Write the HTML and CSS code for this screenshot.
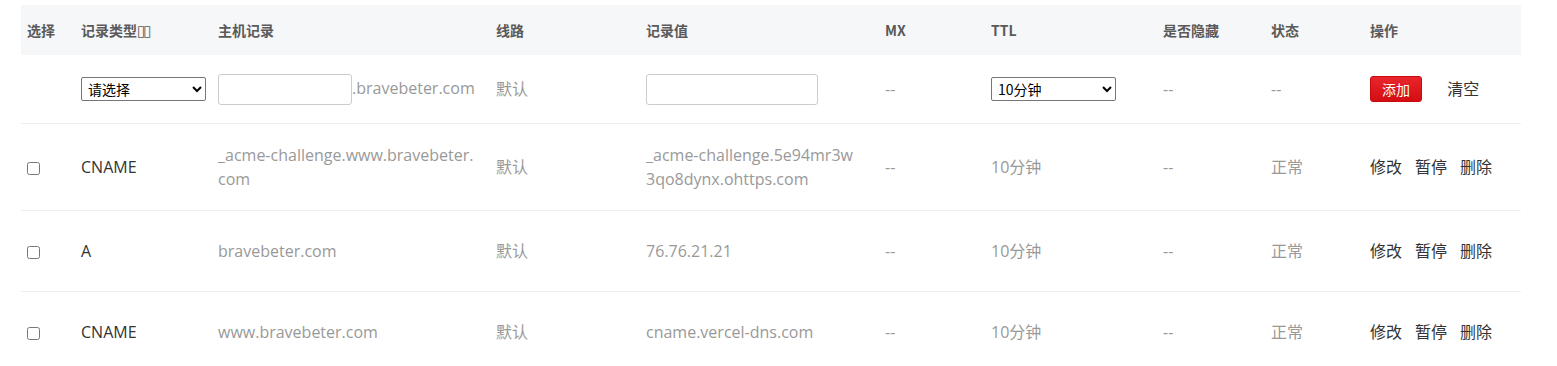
FILE: index.html
```html
<!DOCTYPE html>
<html lang="zh-CN">
<head>
    <meta charset="UTF-8">
    <title>解析记录</title>
    <link rel="stylesheet" href="styles.css">
</head>
<body>
    <div class="wrap">
        <table class="records">
            <colgroup>
                <col class="c-check">
                <col class="c-type">
                <col class="c-host">
                <col class="c-line">
                <col class="c-value">
                <col class="c-mx">
                <col class="c-ttl">
                <col class="c-hide">
                <col class="c-status">
                <col class="c-op">
            </colgroup>
            <thead>
                <tr>
                    <th>选择</th>
                    <th>记录类型<span class="tofu">▯▯</span></th>
                    <th>主机记录</th>
                    <th>线路</th>
                    <th>记录值</th>
                    <th>MX</th>
                    <th>TTL</th>
                    <th>是否隐藏</th>
                    <th>状态</th>
                    <th>操作</th>
                </tr>
            </thead>
            <tbody>
                <tr class="add-row">
                    <td></td>
                    <td>
                        <select class="sel">
                            <option>请选择</option>
                            <option>A</option>
                            <option>CNAME</option>
                        </select>
                    </td>
                    <td><input type="text" class="host-input"><span class="muted">.bravebeter.com</span></td>
                    <td class="muted">默认</td>
                    <td><input type="text" class="value-input"></td>
                    <td class="muted">--</td>
                    <td>
                        <select class="sel">
                            <option>10分钟</option>
                        </select>
                    </td>
                    <td class="muted">--</td>
                    <td class="muted">--</td>
                    <td>
                        <button class="btn-add">添加</button>
                        <a class="btn-clear" href="#">清空</a>
                    </td>
                </tr>
                <tr>
                    <td><input type="checkbox"></td>
                    <td class="dark">CNAME</td>
                    <td class="muted">_acme-challenge.www.bravebeter.<br>com</td>
                    <td class="muted">默认</td>
                    <td class="muted">_acme-challenge.5e94mr3w<br>3qo8dynx.ohttps.com</td>
                    <td class="muted">--</td>
                    <td class="muted">10分钟</td>
                    <td class="muted">--</td>
                    <td class="muted">正常</td>
                    <td class="ops"><a href="#">修改</a><a href="#">暂停</a><a href="#">删除</a></td>
                </tr>
                <tr>
                    <td><input type="checkbox"></td>
                    <td class="dark">A</td>
                    <td class="muted">bravebeter.com</td>
                    <td class="muted">默认</td>
                    <td class="muted">76.76.21.21</td>
                    <td class="muted">--</td>
                    <td class="muted">10分钟</td>
                    <td class="muted">--</td>
                    <td class="muted">正常</td>
                    <td class="ops"><a href="#">修改</a><a href="#">暂停</a><a href="#">删除</a></td>
                </tr>
                <tr>
                    <td><input type="checkbox"></td>
                    <td class="dark">CNAME</td>
                    <td class="muted">www.bravebeter.com</td>
                    <td class="muted">默认</td>
                    <td class="muted">cname.vercel-dns.com</td>
                    <td class="muted">--</td>
                    <td class="muted">10分钟</td>
                    <td class="muted">--</td>
                    <td class="muted">正常</td>
                    <td class="ops"><a href="#">修改</a><a href="#">暂停</a><a href="#">删除</a></td>
                </tr>
            </tbody>
        </table>
    </div>
</body>
</html>
```

FILE: styles.css
```css
body {
    margin: 0;
    padding: 0;
    font-family: "Open Sans", "Noto Sans CJK SC", sans-serif;
    background-color: #fff;
}
.wrap {
    padding: 5px 0 0 21px;
}
.records {
    width: 1500px;
    border-collapse: collapse;
    table-layout: fixed;
}
.c-check { width: 54px; }
.c-type { width: 137px; }
.c-host { width: 278px; }
.c-line { width: 150px; }
.c-value { width: 239px; }
.c-mx { width: 106px; }
.c-ttl { width: 172px; }
.c-hide { width: 108px; }
.c-status { width: 99px; }
.c-op { width: 157px; }

.records th {
    background-color: #f6f7f9;
    height: 50px;
    padding: 0 6px;
    text-align: left;
    font-size: 14px;
    font-weight: bold;
    color: #5a5a5a;
    font-family: "Noto Sans CJK SC", sans-serif;
}
.tofu {
    font-family: "DejaVu Sans", sans-serif;
    font-weight: normal;
    font-size: 15px;
    letter-spacing: -2px;
}
.records td {
    padding: 19px 6px;
    height: 42px;
    font-size: 16px;
    line-height: 24px;
    vertical-align: middle;
    border-bottom: 1px solid #eee;
    color: #999;
    white-space: nowrap;
}
.records tr.add-row td {
    padding: 0 6px;
    height: 68px;
}
.records td.dark {
    color: #333;
}
.muted {
    color: #999;
}
.records input[type="checkbox"] {
    margin: 0;
    width: 13px;
    height: 13px;
    vertical-align: middle;
}
.sel {
    width: 125px;
    height: 24px;
    font-size: 14px;
    font-family: "Noto Sans CJK SC", sans-serif;
    color: #000;
    border: 1px solid #767676;
    border-radius: 2px;
    background-color: #fff;
    padding: 0 2px;
}
.host-input, .value-input {
    height: 31px;
    box-sizing: border-box;
    border: 1px solid #ccc;
    border-radius: 3px;
    vertical-align: middle;
    padding: 0 4px;
}
.host-input {
    width: 134px;
}
.value-input {
    width: 172px;
}
.btn-add {
    background: linear-gradient(#e8262b, #d30d13);
    color: #fff;
    border: 1px solid #c90b10;
    border-radius: 3px;
    width: 52px;
    height: 26px;
    font-size: 14px;
    font-family: "Noto Sans CJK SC", sans-serif;
    padding: 0;
    vertical-align: middle;
    cursor: pointer;
}
.btn-clear {
    margin-left: 21px;
    color: #333;
    font-size: 16px;
    text-decoration: none;
    vertical-align: middle;
}
.ops a {
    color: #333;
    text-decoration: none;
    margin-right: 13px;
}
```
